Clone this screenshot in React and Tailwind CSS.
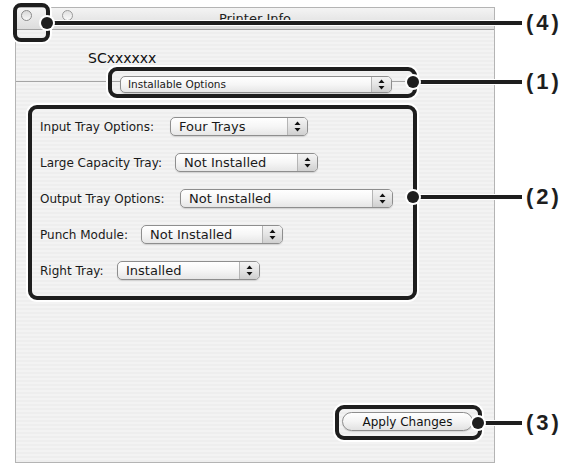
import React from "react";

function Arrows() {
  return (
    <svg width="7" height="11" viewBox="0 0 7 11">
      <path d="M3.5 0.5 L6.5 4 L0.5 4 Z" fill="#111" />
      <path d="M3.5 10.5 L6.5 7 L0.5 7 Z" fill="#111" />
    </svg>
  );
}

function Popup({ className, text, small }) {
  return (
    <div
      className={`${className} flex overflow-hidden rounded-[5px] border border-[#8e8e8e] bg-linear-to-b from-white via-[#f6f6f6] to-[#e6e6e6] shadow-[0_1px_1px_rgba(0,0,0,0.12)]`}
    >
      <div
        className={
          small
            ? "flex flex-1 items-center pl-[7px] text-[10.5px] leading-none text-[#1a1a1a]"
            : "flex flex-1 items-center pl-[8px] text-[13px] leading-none text-[#1a1a1a]"
        }
      >
        {text}
      </div>
      <div className="flex w-[20px] items-center justify-center border-l border-[#b5b5b5] bg-linear-to-b from-[#f4f4f4] via-[#e4e4e4] to-[#cfcfcf]">
        <Arrows />
      </div>
    </div>
  );
}

function Row({ label, labelW, popW, value }) {
  return (
    <div className="flex h-[19px] items-center">
      <span className={`${labelW} text-[12px] leading-none text-[#1a1a1a]`}>{label}</span>
      <Popup className={`${popW} h-[19px]`} text={value} />
    </div>
  );
}

export default function App() {
  return (
    <div className="relative h-[463px] w-[576px] overflow-hidden bg-white font-['DejaVu_Sans',sans-serif]">
      <div className="pl-[15px] pt-[7px]">
        <div className="flex h-[456px] w-[480px] flex-col border border-[#b4b4b4] bg-[repeating-linear-gradient(0deg,#eeeeee_0px,#eeeeee_2px,#f3f3f3_2px,#f3f3f3_4px)]">
          {/* title bar */}
          <div className="grid h-[22px] grid-cols-[1fr_auto_1fr] border-b border-[#a3a3a3] bg-linear-to-b from-[#f4f4f4] to-[#dcdcdc]">
            <div className="flex items-start gap-[30px] pl-[5px] pt-[2px]">
              <div className="h-[11px] w-[11px] rounded-full border border-[#8a8a8a] bg-linear-to-b from-[#d8d8d8] to-[#f8f8f8]" />
              <div className="h-[11px] w-[11px] rounded-full border border-[#9a9a9a] bg-linear-to-b from-[#e0e0e0] to-[#fafafa]" />
            </div>
            <div className="pt-[3px] text-[13px] leading-[16px] text-[#222]">Printer Info</div>
            <div />
          </div>

          {/* content */}
          <div className="flex flex-1 flex-col">
            <div className="pl-[72px] pt-[20px] text-[14px] leading-[16px] text-[#111]">SCxxxxxx</div>
            <div className="mt-[10px] flex h-[17px] items-start">
              <div className="mt-[5px] h-px w-[104px] bg-[#a5a5a5]" />
              <Popup className="h-[17px] w-[272px]" text="Installable Options" small />
              <div className="mt-[5px] h-px flex-1 bg-[#a5a5a5]" />
            </div>

            <div className="mt-[24px] flex flex-col gap-[17px] pl-[24px]">
              <Row label="Input Tray Options:" labelW="w-[130px]" popW="w-[138px]" value="Four Trays" />
              <Row label="Large Capacity Tray:" labelW="w-[135px]" popW="w-[143px]" value="Not Installed" />
              <Row label="Output Tray Options:" labelW="w-[140px]" popW="w-[213px]" value="Not Installed" />
              <Row label="Punch Module:" labelW="w-[101px]" popW="w-[142px]" value="Not Installed" />
              <Row label="Right Tray:" labelW="w-[77px]" popW="w-[143px]" value="Installed" />
            </div>

            <div className="mt-auto flex justify-end pb-[31px] pr-[21px]">
              <button className="flex h-[19px] w-[131px] items-center justify-center rounded-full border border-[#8e8e8e] bg-linear-to-b from-white via-[#f4f4f4] to-[#e2e2e2] text-[12px] leading-none text-[#111] shadow-[0_1px_1px_rgba(0,0,0,0.12)]">
                Apply Changes
              </button>
            </div>
          </div>
        </div>
      </div>

      {/* callout lines */}
      <div className="absolute left-[47px] top-[21px] h-[4px] w-[475px] bg-[#1e1e1e] shadow-[0_0_0_1px_white]" />
      <div className="absolute left-[413px] top-[80px] h-[4px] w-[109px] bg-[#1e1e1e] shadow-[0_0_0_1px_white]" />
      <div className="absolute left-[413px] top-[195px] h-[4px] w-[109px] bg-[#1e1e1e] shadow-[0_0_0_1px_white]" />
      <div className="absolute left-[478px] top-[421px] h-[4px] w-[44px] bg-[#1e1e1e] shadow-[0_0_0_1px_white]" />

      {/* callout boxes */}
      <div className="absolute left-[13px] top-[3px] h-[39px] w-[37px] rounded-[8px] border-4 border-[#1e1e1e] shadow-[0_0_0_2px_white]" />
      <div className="absolute left-[108px] top-[67px] h-[31px] w-[309px] rounded-[9px] border-4 border-[#1e1e1e] shadow-[0_0_0_2px_white]" />
      <div className="absolute left-[28px] top-[105px] h-[195px] w-[389px] rounded-[9px] border-4 border-[#1e1e1e] shadow-[0_0_0_2px_white]" />
      <div className="absolute left-[335px] top-[405px] h-[35px] w-[147px] rounded-[9px] border-4 border-[#1e1e1e] shadow-[0_0_0_2px_white]" />

      {/* dots */}
      <div className="absolute left-[41px] top-[17px] h-[12px] w-[12px] rounded-full bg-[#1e1e1e] shadow-[0_0_0_2px_white]" />
      <div className="absolute left-[407px] top-[76px] h-[12px] w-[12px] rounded-full bg-[#1e1e1e] shadow-[0_0_0_2px_white]" />
      <div className="absolute left-[407px] top-[191px] h-[12px] w-[12px] rounded-full bg-[#1e1e1e] shadow-[0_0_0_2px_white]" />
      <div className="absolute left-[472px] top-[417px] h-[12px] w-[12px] rounded-full bg-[#1e1e1e] shadow-[0_0_0_2px_white]" />

      {/* labels */}
      <div className="absolute left-[526px] top-[12px] font-['Liberation_Sans',Arial,sans-serif] text-[22px] font-bold leading-[22px] tracking-[3px] text-[#1e1e1e]">(4)</div>
      <div className="absolute left-[526px] top-[71px] font-['Liberation_Sans',Arial,sans-serif] text-[22px] font-bold leading-[22px] tracking-[3px] text-[#1e1e1e]">(1)</div>
      <div className="absolute left-[526px] top-[186px] font-['Liberation_Sans',Arial,sans-serif] text-[22px] font-bold leading-[22px] tracking-[3px] text-[#1e1e1e]">(2)</div>
      <div className="absolute left-[526px] top-[412px] font-['Liberation_Sans',Arial,sans-serif] text-[22px] font-bold leading-[22px] tracking-[3px] text-[#1e1e1e]">(3)</div>
    </div>
  );
}
